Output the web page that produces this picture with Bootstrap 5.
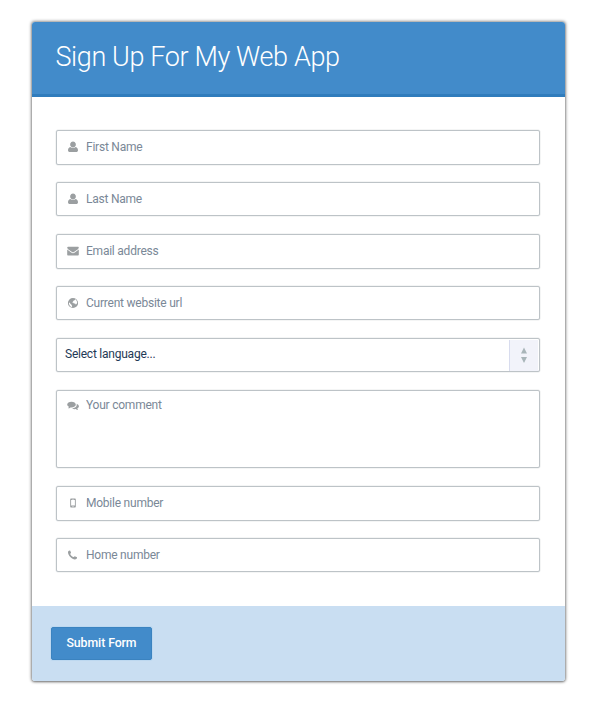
<!DOCTYPE html>
<html lang="en">
<head>
<meta charset="utf-8">
<meta name="viewport" content="width=device-width, initial-scale=1">
<title>Sign Up For My Web App</title>
<link href="https://cdn.jsdelivr.net/npm/bootstrap@5.3.0/dist/css/bootstrap.min.css" rel="stylesheet">
<style>
body{font-family:Roboto,sans-serif;background:#fff;padding:22px 35px 30px 32px}
.signup{height:659px;border-radius:3px;box-shadow:0 0 3px 1px rgba(0,0,0,.42),0 1px 2px rgba(0,0,0,.25)}
.signup-head{height:75px;background:#428bca;border-bottom:3px solid #307cbc;padding:0 23px 3px 23.5px}
.signup-head h1{font-size:27px;font-weight:300;color:#fff;line-height:32px;letter-spacing:-.38px;white-space:nowrap}
.signup-body{height:509px;padding:33px 25px 0 24px}
.field{height:35px;margin-bottom:17px;padding-bottom:1px;border:1px solid #bdc3c7;box-shadow:0 0 0 .5px rgba(189,195,199,.35);border-radius:2px;background:#fff;overflow:hidden}
.field.short{height:34px;margin-bottom:18px;padding-bottom:0}
.field.tall{height:78px;margin-bottom:18px}
.field svg{width:14px;height:14px;margin-left:9px;margin-right:6px;fill:#9b9fa1;flex:none}
.field .form-control,.field .form-select{font-size:12px;line-height:16px;color:#34495e;letter-spacing:-.23px;box-shadow:none}
.field .form-control::placeholder{color:#7a8897;opacity:1}
.field textarea{resize:none;height:74px;padding-top:6px}
.field .form-select{background-image:none;color:#1f3a56;padding-left:8px;margin-bottom:2px}
.stepper{width:29px;height:31px;margin:0 1px 0 0;background:#f2f3fa;border-left:1px solid #d8dcee}
.stepper svg{width:8px;height:18px;margin:0 0 1px;fill:#a9b5b9}
.signup-foot{height:75px;background:#c9def2;padding:0 19px}
.signup-foot .btn{--bs-btn-bg:#428bca;--bs-btn-border-color:#3b83c0;width:101px;height:33px;font-size:12.3px;font-weight:500;letter-spacing:-.08px;border-radius:2px;padding:0;box-shadow:0 0 0 1px #bdd8f0}
</style>
</head>
<body>
<main class="signup d-flex flex-column overflow-hidden">
<header class="signup-head d-flex align-items-center"><h1 class="m-0">Sign Up For My Web App</h1></header>
<form class="signup-body">
<div class="field d-flex align-items-center"><svg viewBox="0 0 14 14"><path d="M7 1.600a2.900 2.900 0 0 1 1.900 5.100C8.300 7.200 7.700 7.500 7 7.500S5.700 7.200 5.100 6.700A2.900 2.900 0 0 1 7 1.600zM4.300 6.900c.8.700 1.700 1.100 2.700 1.100s1.900-.4 2.700-1.100c1.600.3 2.300 1.700 2.300 3.300 0 1.100-.7 1.900-1.800 1.900H3.800c-1.100 0-1.800-.8-1.800-1.900 0-1.600.7-3 2.300-3.300z"/></svg><input class="form-control border-0 p-0 bg-transparent" placeholder="First Name"></div>
<div class="field short d-flex align-items-center"><svg viewBox="0 0 14 14"><path d="M7 1.600a2.900 2.900 0 0 1 1.900 5.100C8.300 7.200 7.700 7.500 7 7.500S5.700 7.200 5.100 6.700A2.900 2.900 0 0 1 7 1.600zM4.300 6.900c.8.700 1.700 1.100 2.700 1.100s1.900-.4 2.700-1.100c1.600.3 2.300 1.700 2.300 3.300 0 1.100-.7 1.900-1.800 1.900H3.800c-1.100 0-1.800-.8-1.800-1.900 0-1.600.7-3 2.300-3.300z"/></svg><input class="form-control border-0 p-0 bg-transparent" placeholder="Last Name"></div>
<div class="field d-flex align-items-center"><svg viewBox="0 0 14 14"><path d="M2.200 2.700h9.600c.6 0 1 .4 1 .9 0 .8-.6 1.400-1.200 1.800L8.300 7.700c-.4.300-.8.600-1.300.6s-.9-.3-1.300-.6L2.400 5.400C1.800 5 1.200 4.400 1.200 3.600c0-.5.400-.9 1-.9zM1.200 5.600l4 2.800c.6.400 1.100.8 1.800.8s1.200-.4 1.800-.8l4-2.800v4.900c0 .6-.5 1-1 1H2.200c-.6 0-1-.4-1-1z"/></svg><input type="email" class="form-control border-0 p-0 bg-transparent" placeholder="Email address"></div>
<div class="field short d-flex align-items-center"><svg viewBox="0 0 14 14"><path fill-rule="evenodd" d="M7 1.900a5.100 5.100 0 1 1 0 10.200A5.100 5.100 0 0 1 7 1.900zM7.300 2.800 8.700 3.100 9.100 4.100 7.800 4.600 7 5.500 6.200 6.500 7.300 6.700 7.900 7.600 9.100 7.600 9.700 8.400 10.600 8 11.200 6.500 10.600 4.700 9.900 3.800 9.300 3.200zM3.300 6.300 2.900 7.400 3.200 8.600 4 9.900 5.300 10.900 6.300 11.100 5.700 10.100 6 9.200 5.200 8.400 4.200 7.600z"/></svg><input type="url" class="form-control border-0 p-0 bg-transparent" placeholder="Current website url"></div>
<div class="field short d-flex align-items-center"><select class="form-select border-0 py-0 pe-0 bg-transparent"><option>Select language...</option></select><span class="stepper d-flex align-items-center justify-content-center flex-shrink-0"><svg viewBox="0 0 8 18"><path d="M1 7.500 4 1.500l3 6zM1 11h6l-3 6z"/></svg></span></div>
<div class="field tall d-flex align-items-start"><svg class="mt-2" viewBox="0 0 14 14"><path d="M5.500 2.700c2.400 0 4.300 1.300 4.300 2.900S7.900 8.500 5.500 8.500l-1-.1c-.7.500-1.500.9-2.400.9.500-.4.700-.8.800-1.500-1-.5-1.700-1.300-1.700-2.200 0-1.600 1.900-2.900 4.300-2.900zM10.500 4.700c1.400.4 2.400 1.400 2.400 2.600 0 .9-.6 1.700-1.600 2.200.1.600.4 1 .9 1.500-1 0-1.800-.4-2.500-.9-1.400.200-2.700-.1-3.600-.8 2.600-.1 4.700-1.600 4.700-3.600 0-.4-.1-.7-.3-1z"/></svg><textarea class="form-control border-0 px-0 pb-0 bg-transparent" placeholder="Your comment"></textarea></div>
<div class="field d-flex align-items-center"><svg viewBox="0 0 14 14"><path fill-rule="evenodd" d="M5.200 2.600h3.600c.6 0 1 .4 1 1v6.800c0 .6-.4 1-1 1H5.200c-.6 0-1-.4-1-1V3.600c0-.6.400-1 1-1zM5.100 4v5.500h3.800V4zM7 9.900a.5.500 0 1 0 0 1 .5.500 0 0 0 0-1zM6.300 3.100v.3h1.400v-.3z"/></svg><input type="tel" class="form-control border-0 p-0 bg-transparent" placeholder="Mobile number"></div>
<div class="field short d-flex align-items-center"><svg viewBox="0 0 14 14"><path d="M3.800 2.500c.3 0 .5.300 1.200 1.900.2.500-.8 1-.8 1.500.2.900 1.900 2.700 3 3.100.6.200 1.100-.9 1.600-.8 1.700.7 2.300 1 2.300 1.300 0 1.200-1.100 1.900-2.200 1.900C6 11.200 2 7.400 2 4.500c0-1.100.7-2 1.800-2z"/></svg><input type="tel" class="form-control border-0 p-0 bg-transparent" placeholder="Home number"></div>
</form>
<footer class="signup-foot d-flex align-items-center"><button type="button" class="btn btn-primary">Submit Form</button></footer>
</main>
<script src="https://cdn.jsdelivr.net/npm/bootstrap@5.3.0/dist/js/bootstrap.bundle.min.js"></script>
</body>
</html>
